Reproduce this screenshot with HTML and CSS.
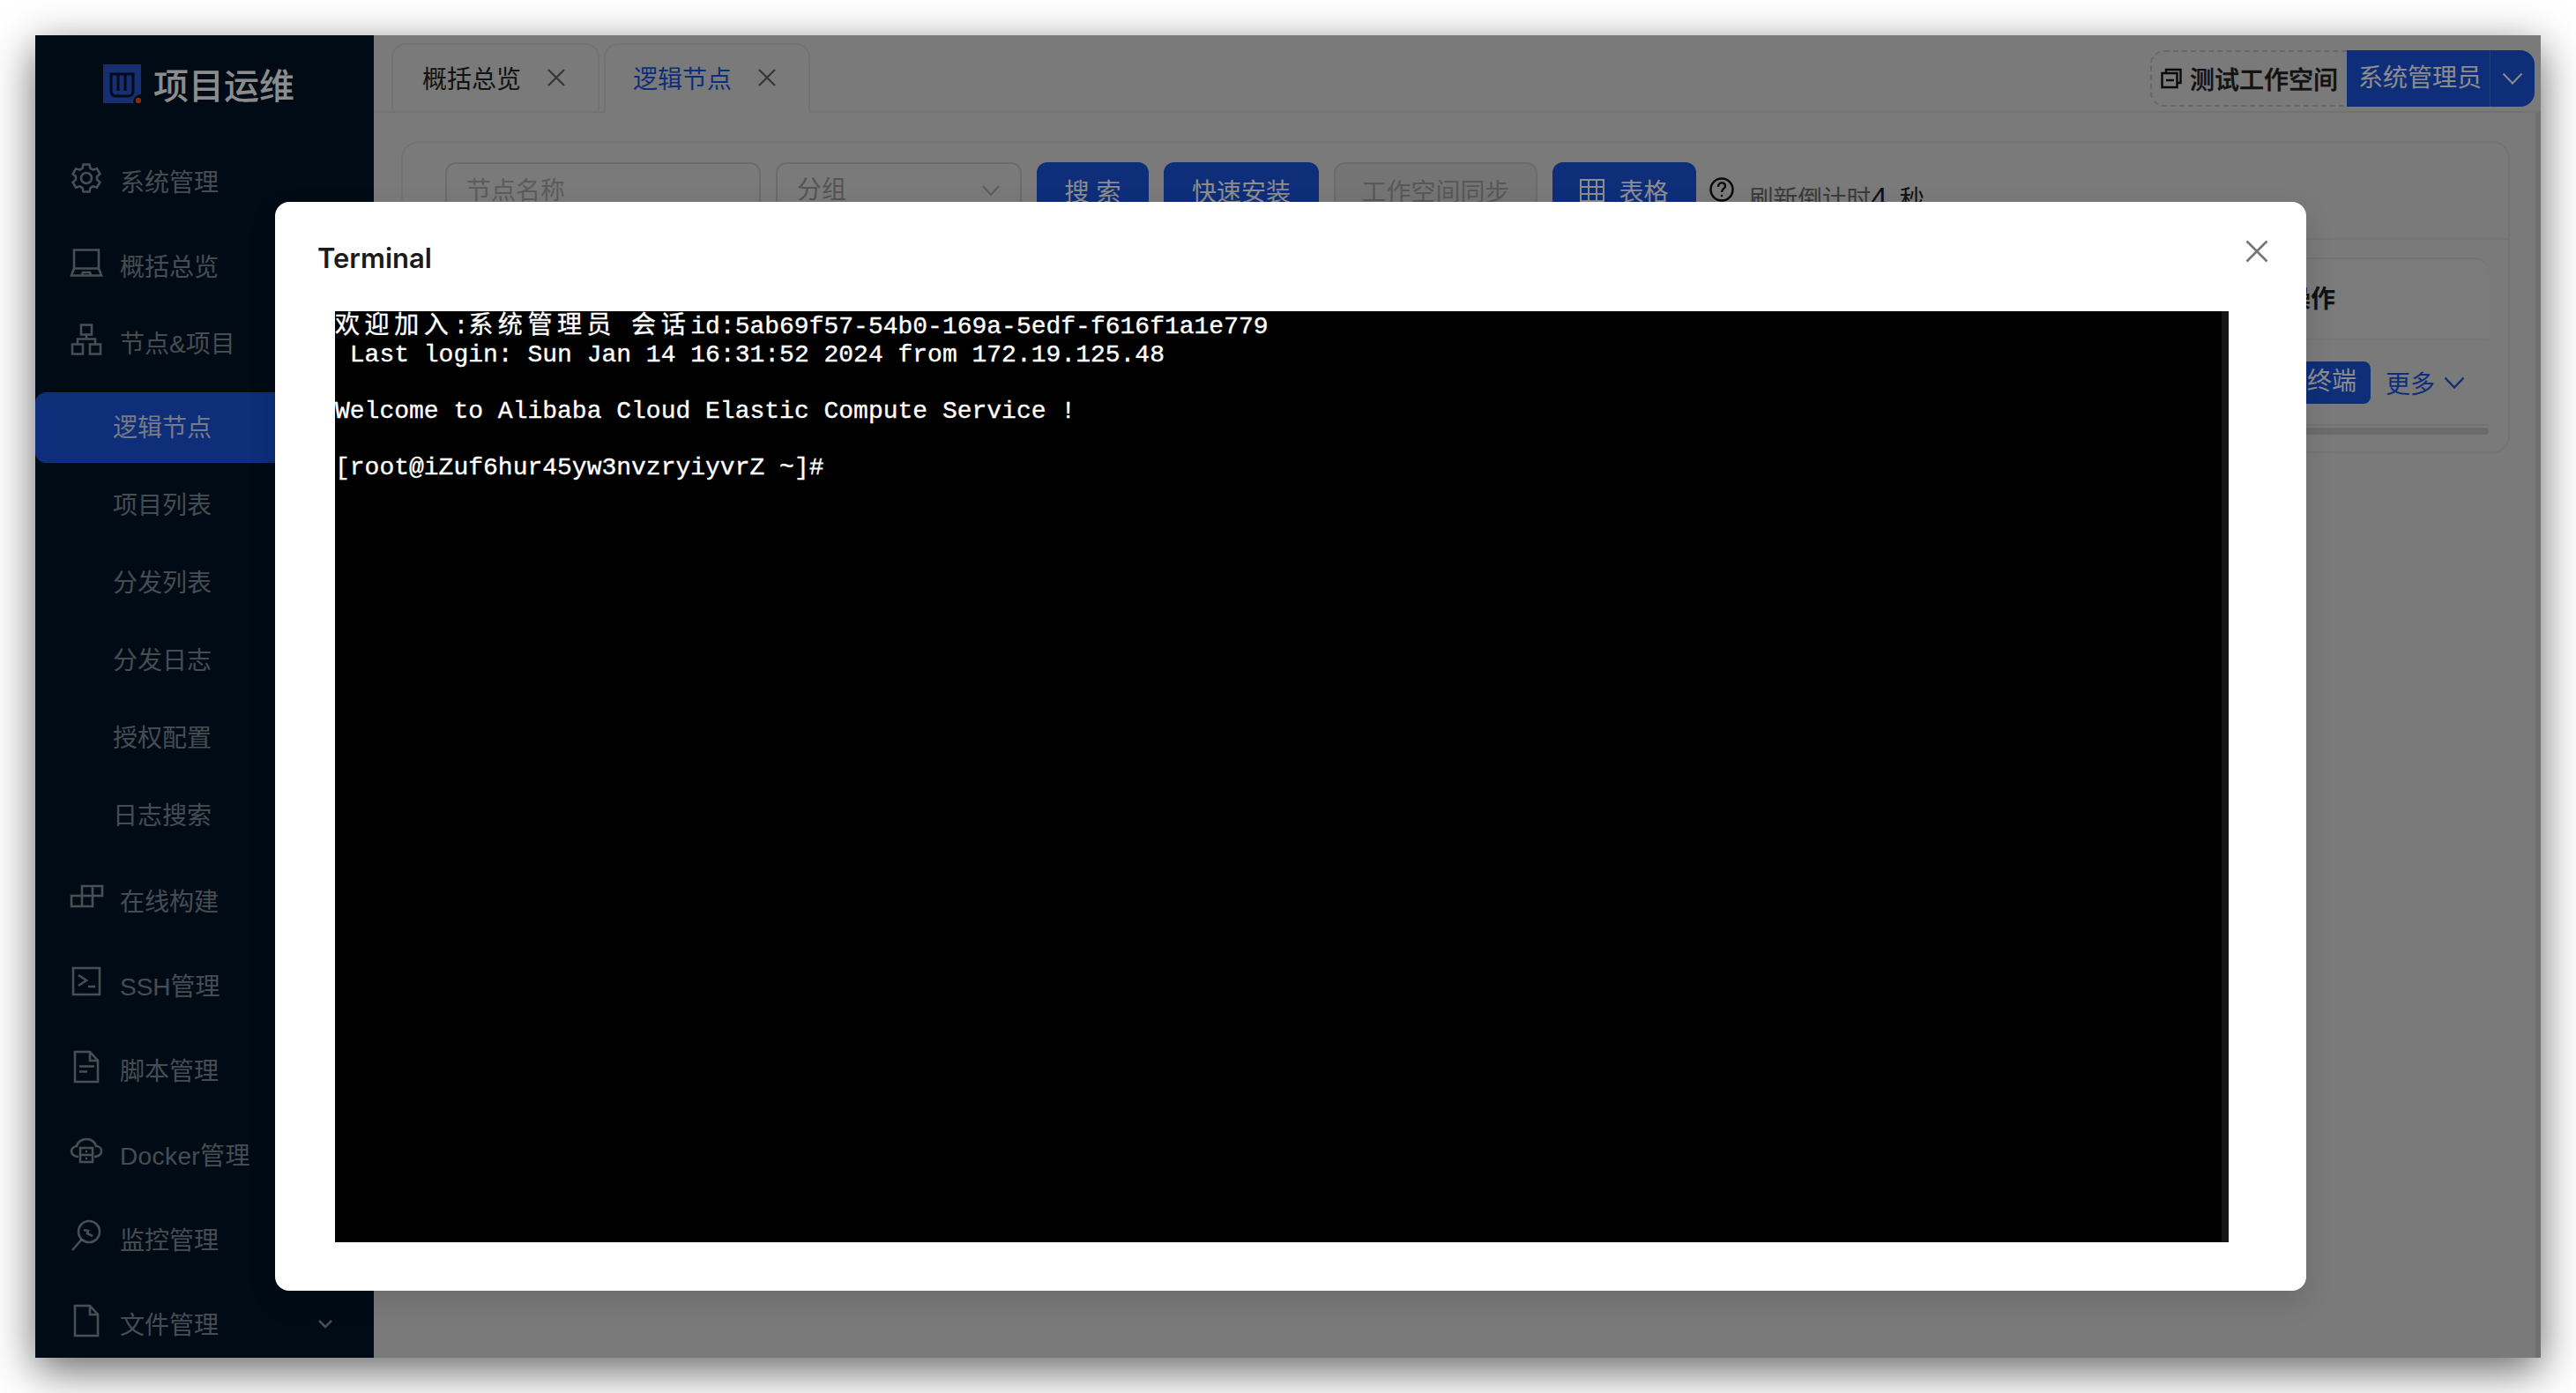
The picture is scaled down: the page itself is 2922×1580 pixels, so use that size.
FILE: index.html
```html
<!DOCTYPE html>
<html lang="zh-CN">
<head>
<meta charset="utf-8">
<title>项目运维</title>
<link rel="stylesheet" href="styles.css">
</head>
<body>
<div class="window">
  <aside class="sidebar">
    <div class="brand">
      <svg class="logo" viewBox="0 0 43 44">
        <path class="logo-blue" d="M0 0H43V34A9 9 0 0 0 34 44H0Z"/>
        <path class="logo-line" d="M9 11H34V30Q34 36 28 36H15Q9 36 9 30Z M17 12V30 M25 12V30"/>
        <circle class="logo-dot" cx="40" cy="41" r="3.2"/>
      </svg>
      <span class="brand-name">项目运维</span>
    </div>
    <nav class="menu">
      <div class="item">
        <svg class="ico" viewBox="0 0 36 36"><path d="M14.5 2.5h7l1 4.5 3 1.7 4.4-1.4 3.5 6-3.4 3.1v3.2l3.4 3.1-3.5 6-4.4-1.4-3 1.7-1 4.5h-7l-1-4.5-3-1.7-4.4 1.4-3.5-6 3.4-3.1v-3.2l-3.4-3.1 3.5-6 4.4 1.4 3-1.7z"/><circle cx="18" cy="18" r="6"/></svg>
        <span>系统管理</span>
      </div>
      <div class="item">
        <svg class="ico" viewBox="0 0 36 36"><path d="M4 3.5h28v21H4z M4 24.5L1 32.5H35L32 24.5 M13 32.5l1-3.5h8l1 3.5"/></svg>
        <span>概括总览</span>
      </div>
      <div class="item item-tight">
        <svg class="ico" viewBox="0 0 36 36"><path d="M12 1.5h12v11H12z M2 23.5h12v11H2z M22 23.5h12v11H22z M18 12.5v5 M8 23.5v-6h20v6"/></svg>
        <span>节点&amp;项目</span>
      </div>
      <div class="submenu">
        <div class="sub sub-on">逻辑节点</div>
        <div class="sub">项目列表</div>
        <div class="sub">分发列表</div>
        <div class="sub">分发日志</div>
        <div class="sub">授权配置</div>
        <div class="sub">日志搜索</div>
      </div>
      <div class="item">
        <svg class="ico" viewBox="0 0 36 36"><path d="M1 16h12v12H1z M13 16h12v12H13z M13 16V5h23v11H25 M25 5v11"/></svg>
        <span>在线构建</span>
      </div>
      <div class="item">
        <svg class="ico" viewBox="0 0 36 36"><path d="M3 2h30v30H3z M9 10l9 6-9 6 M20 23h8"/></svg>
        <span>SSH管理</span>
      </div>
      <div class="item">
        <svg class="ico" viewBox="0 0 36 36"><path d="M5 1h17l9 10v24H5z M22 1v10h9 M10 17.5h17 M10 23.5h9"/></svg>
        <span>脚本管理</span>
      </div>
      <div class="item">
        <svg class="ico" viewBox="0 0 36 36"><path d="M9 24c-5 0-8-3-8-6.500s4-5.500 6-5.500c1-5 6-8 11-8s10 3 11 8c3 0 6 2 6 5.500s-3 6.500-8 6.500 M11 14h14v16H11z M11 22h14 M17 18h2 M17 26h2"/></svg>
        <span class="latin-wide">Docker管理</span>
      </div>
      <div class="item">
        <svg class="ico" viewBox="0 0 36 36"><circle cx="21" cy="13" r="12"/><path d="M12.500 22L2 34 M15 11l5 1-1 3 6 3"/></svg>
        <span>监控管理</span>
      </div>
      <div class="item item-last">
        <svg class="ico" viewBox="0 0 36 36"><path d="M5 1h17l9 10v24H5z M22 1v10h9"/></svg>
        <span>文件管理</span>
        <svg class="caret" viewBox="0 0 18 12"><path d="M2 3l7 7 7-7"/></svg>
      </div>
    </nav>
  </aside>

  <main class="main">
    <header class="topbar">
      <div class="tabs">
        <div class="tab">
          <span>概括总览</span>
          <svg class="tab-x" viewBox="0 0 20 20"><path d="M1 1l18 18M19 1L1 19"/></svg>
        </div>
        <div class="tab tab-on">
          <span>逻辑节点</span>
          <svg class="tab-x" viewBox="0 0 20 20"><path d="M1 1l18 18M19 1L1 19"/></svg>
        </div>
      </div>
      <div class="account">
        <div class="workspace">
          <svg class="ws-ico" viewBox="0 0 24 24"><path d="M1.500 6h17v16h-17z M6 6V2h16.500v15h-4 M6 14h9"/></svg>
          <span>测试工作空间</span>
        </div>
        <div class="user">系统管理员</div>
        <div class="user-more"><svg viewBox="0 0 24 14"><path d="M1.500 1.500L12 12.500 22.500 1.500"/></svg></div>
      </div>
    </header>

    <section class="body">
      <div class="card">
        <div class="filters">
          <div class="field field-name">节点名称</div>
          <div class="field field-group">
            <span>分组</span>
            <svg viewBox="0 0 20 12"><path d="M1 1l9 10 9-10"/></svg>
          </div>
          <div class="btn btn-search">搜 索</div>
          <div class="btn btn-install">快速安装</div>
          <div class="btn btn-off">工作空间同步</div>
          <div class="btn btn-table">
            <svg viewBox="0 0 28 26"><path d="M1 1h26v24H1z M1 9h26 M1 17h26 M10 1v24 M19 1v24"/></svg>
            <span>表格</span>
          </div>
          <div class="refresh">
            <svg viewBox="0 0 28 28"><circle cx="14" cy="14" r="12.500"/><path d="M10 11c0-6 8-6 8-1 0 3-4 3-4 7"/><circle class="dot" cx="14" cy="21" r="1.200"/></svg>
            <span class="refresh-label">刷新倒计时</span><span class="refresh-num"><span class="refresh-digit">4</span> 秒</span>
          </div>
        </div>
        <div class="table">
          <div class="thead"><div class="th-op">操作</div></div>
          <div class="trow">
            <div class="btn-term">终端</div>
            <div class="more">更多 <svg viewBox="0 0 24 14"><path d="M1.500 1.500L12 12.500 22.500 1.500"/></svg></div>
          </div>
          <div class="hscroll"></div>
        </div>
      </div>
    </section>
  </main>

  <div class="overlay">
    <div class="modal">
      <svg class="modal-x" viewBox="0 0 26 26"><path d="M1.500 1.500l23 23M24.500 1.500l-23 23"/></svg>
      <div class="modal-title">Terminal</div>
      <div class="terminal"><pre class="term-text"><span class="cjk">欢迎加入</span>:<span class="cjk">系统管理员</span> <span class="cjk">会话</span>id:5ab69f57-54b0-169a-5edf-f616f1a1e779
 Last login: Sun Jan 14 16:31:52 2024 from 172.19.125.48

Welcome to Alibaba Cloud Elastic Compute Service !

[root@iZuf6hur45yw3nvzryiyvrZ ~]#</pre></div>
    </div>
  </div>
</div>
</body>
</html>
```

FILE: styles.css
```css
* { box-sizing: border-box; }
html, body { margin: 0; height: 100%; background: #fff; overflow: hidden; }
body {
  padding: 40px;
  font-family: "Liberation Sans", "Noto Sans CJK SC", sans-serif;
  font-size: 28px;
}
.window {
  position: relative;
  display: flex;
  width: 2842px;
  height: 1500px;
  overflow: hidden;
  background: #dedede;
  box-shadow: 0 14px 46px rgba(0,0,0,.6);
}

/* sidebar */
.sidebar {
  flex: 0 0 384px;
  height: 1500px;
  background: #001529;
  color: rgba(255,255,255,.52);
  overflow: hidden;
}
.brand {
  display: flex;
  align-items: center;
  gap: 15px;
  height: 44px;
  margin: 33px 0 48px 77px;
  color: #fff;
  font-size: 40px;
  font-weight: 500;
  line-height: 44px;
}
.brand-name { padding-top: 6px; margin-left: -1px; }
.logo { width: 43px; height: 44px; flex: none; }
.logo-blue { fill: #2a55d0; }
.logo-line { fill: none; stroke: #001529; stroke-width: 3; }
.logo-dot { fill: #ff4a1c; }
.menu { display: flex; flex-direction: column; }
.item {
  display: flex;
  align-items: center;
  gap: 21px;
  height: 80px;
  flex: none;
  padding-left: 40px;
  margin-bottom: 16px;
}
.item > span { margin-left: -1px; }
.latin-wide { letter-spacing: .4px; }
.item-tight { margin-top: -9px; margin-bottom: 17px; }
.item-last { margin-bottom: 0; }
.ico {
  width: 36px; height: 36px; flex: none;
  margin-bottom: 6px;
  fill: none; stroke: currentColor; stroke-width: 2.6;
  overflow: visible;
}
.caret {
  width: 18px; height: 12px;
  margin-left: auto; margin-right: 46px;
  fill: none; stroke: currentColor; stroke-width: 2.6;
}
.submenu { display: flex; flex-direction: column; gap: 8px; margin-bottom: 16px; }
.sub { height: 80px; flex: none; line-height: 82px; padding-left: 88px; }
.sub-on { background: #1b54de; color: rgba(255,255,255,.82); border-radius: 12px 0 0 12px; }

/* main */
.main { flex: 1; min-width: 0; display: flex; flex-direction: column; }
.topbar {
  flex: 0 0 88px;
  min-height: 0;
  height: 88px;
  display: flex;
  justify-content: space-between;
  padding: 9px 6px 0 20px;
  border-bottom: 2px solid #cfcfcf;
}
.tabs { display: flex; gap: 5px; height: 79px; }
.tab {
  display: flex;
  align-items: center;
  gap: 30px;
  width: 236px;
  height: 79px;
  padding: 0 0 2px 33px;
  border: 2px solid #cfcfcf;
  border-radius: 16px 16px 0 0;
  color: #222;
}
.tab-on { width: 234px; color: #1b54de; background: #dedede; border-bottom-color: #dedede; padding-left: 31px; }
.tab-x { width: 20px; height: 20px; fill: none; stroke: #666; stroke-width: 2.4; }
.account { display: flex; height: 64px; margin-top: 8px; padding-right: 1px; }
.workspace {
  display: flex;
  align-items: center;
  gap: 9px;
  width: 223px;
  padding-left: 10px;
  border: 2px dashed #bdbdbd;
  border-right: 0;
  border-radius: 16px 0 0 16px;
  color: #222;
  font-weight: 500;
  -webkit-text-stroke: .4px #222;
}
.ws-ico { width: 24px; height: 24px; flex: none; fill: none; stroke: #111; stroke-width: 2.4; }
.user {
  width: 162px;
  line-height: 64px;
  padding-left: 13px;
  background: #1b54de;
  color: #fff;
  white-space: nowrap;
}
.user-more {
  display: flex; align-items: center; justify-content: center;
  width: 51px;
  background: #1b54de;
  border-left: 1px solid #3d6fe8;
  border-radius: 0 16px 16px 0;
}
.user-more svg { width: 24px; height: 14px; fill: none; stroke: #fff; stroke-width: 2; }

.body {
  flex: 1;
  padding: 32px 29px 0 31px;
  border-right: 6px solid #cccccc;
}
.card {
  height: 354px;
  border: 2px solid #d2d2d2;
  border-radius: 20px;
}
.filters {
  display: flex;
  align-items: flex-start;
  gap: 17px;
  height: 110px;
  padding: 22px 0 0 48px;
  border-bottom: 2px solid #d2d2d2;
}
.field {
  height: 64px;
  border: 2px solid #c4c4c4;
  border-radius: 12px;
  line-height: 62px;
  padding-left: 22px;
  color: #a8a8a8;
}
.field-name { width: 358px; }
.field-group {
  display: flex; align-items: center; justify-content: space-between;
  width: 279px;
  color: #9a9a9a;
  padding-right: 23px;
}
.field-group svg { width: 20px; height: 12px; fill: none; stroke: #a8a8a8; stroke-width: 2; }
.btn {
  display: flex; align-items: center; justify-content: center;
  gap: 16px;
  height: 64px;
  background: #1b54de;
  color: #fff;
  border-radius: 12px;
  white-space: pre;
}
.btn-search { width: 127px; }
.btn-install { width: 176px; }
.btn-off { width: 231px; background: #d4d4d4; border: 2px solid #c4c4c4; color: #a0a0a0; }
.btn-table { width: 163px; }
.btn-table svg { width: 28px; height: 26px; fill: none; stroke: #fff; stroke-width: 2; }
.refresh { display: flex; align-items: flex-start; margin-left: -2px; padding-top: 17px; color: #222; }
.refresh svg { width: 28px; height: 28px; margin-right: 17px; fill: none; stroke: #111; stroke-width: 2.4; }
.refresh .dot { fill: #111; stroke: none; }
.refresh-label { color: #6a6a6a; padding-top: 5px; line-height: 40px; font-size: 27.6px; }
.refresh-num { line-height: 40px; padding-top: 3px; word-spacing: 6px; }
.refresh-digit { font-size: 34px; }

.table { margin: 20px 22px 0 24px; display: flex; flex-direction: column; }
.thead {
  display: flex; justify-content: flex-end;
  height: 94px;
  background: #e0e0e0;
  border-top: 2px solid #d2d2d2;
  border-bottom: 2px solid #d6d6d6;
  border-radius: 0 16px 0 0;
}
.th-op { width: 230px; line-height: 92px; font-weight: 700; color: #222; }
.trow {
  display: flex; justify-content: flex-end; align-items: center;
  gap: 17px;
  height: 97px;
  padding-right: 27px;
  border-bottom: 2px solid #d2d2d2;
}
.btn-term {
  height: 48px; width: 88px;
  line-height: 46px; text-align: center;
  background: #1b54de; color: #fff; border-radius: 8px;
}
.more { display: flex; align-items: center; gap: 10px; color: #1b54de; }
.more svg { width: 24px; height: 14px; fill: none; stroke: #1b54de; stroke-width: 2.4; }
.hscroll { height: 8px; margin-top: 2px; background: #c4c4c4; border-radius: 4px; }

/* overlay + modal */
.overlay {
  position: absolute;
  inset: 0;
  display: flex;
  align-items: flex-start;
  padding: 189px 0 0 272px;
  background: rgba(0,0,0,.45);
}
.modal {
  position: relative;
  width: 2304px;
  height: 1235px;
  padding: 40px 0 0 48px;
  background: #fff;
  border-radius: 16px;
  box-shadow: 0 12px 32px rgba(0,0,0,.12);
}
.modal-x {
  position: absolute;
  right: 43px; top: 43px;
  width: 26px; height: 26px;
  fill: none; stroke: #757575; stroke-width: 2.6;
}
.modal-title {
  height: 48px;
  font-family: Inter, "Liberation Sans", sans-serif;
  font-size: 31px;
  font-weight: 600;
  line-height: 48px;
  color: #1b1b1b;
}
.terminal {
  width: 2148px;
  height: 1056px;
  margin: 36px 0 0 20px;
  background: #000;
  border-right: 8px solid #161616;
  overflow: hidden;
}
.term-text {
  margin: -3px 0 0;
  color: #fff;
  font-family: "Liberation Mono", "Noto Sans CJK SC", monospace;
  font-size: 28px;
  line-height: 32px;
  white-space: pre;
  -webkit-text-stroke: .35px #fff;
}
.cjk { font-family: "Noto Sans CJK SC", sans-serif; letter-spacing: 5.6px; }
```
